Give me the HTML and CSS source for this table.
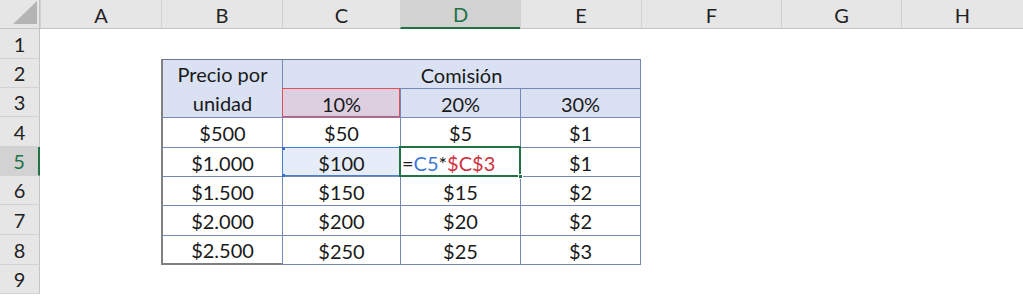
FILE: index.html
```html
<!DOCTYPE html>
<html lang="es">
<head>
  <meta charset="UTF-8" />
  <meta name="viewport" content="width=device-width, initial-scale=1.0"/>
  <title>Comisiones</title>
  <link rel="stylesheet" href="styles.css">
</head>
<body>
  <div class="sheet">
    <!-- column headers -->
    <div class="corner">
      <svg width="24" height="23" viewBox="0 0 24 23"><polygon points="24,0 24,23 0,23" fill="#b4b4b4"/></svg>
    </div>
    <div class="col-head">A</div>
    <div class="col-head">B</div>
    <div class="col-head">C</div>
    <div class="col-head active">D</div>
    <div class="col-head">E</div>
    <div class="col-head">F</div>
    <div class="col-head">G</div>
    <div class="col-head">H</div>

    <!-- row 1 -->
    <div class="row-head">1</div>
    <div></div><div></div><div></div><div></div><div></div><div></div><div></div><div></div>

    <!-- row 2 -->
    <div class="row-head">2</div>
    <div></div>
    <div class="cell head key top merged-v">Precio por<br>unidad</div>
    <div class="cell head top last-col merged-h">Comisión</div>
    <div></div><div></div><div></div>

    <!-- row 3 -->
    <div class="row-head">3</div>
    <div></div>
    <div class="cell head ref-red">10%</div>
    <div class="cell head">20%</div>
    <div class="cell head last-col">30%</div>
    <div></div><div></div><div></div>

    <!-- row 4 -->
    <div class="row-head">4</div>
    <div></div>
    <div class="cell key">$500</div>
    <div class="cell">$50</div>
    <div class="cell">$5</div>
    <div class="cell last-col">$1</div>
    <div></div><div></div><div></div>

    <!-- row 5 -->
    <div class="row-head active">5</div>
    <div></div>
    <div class="cell key">$1.000</div>
    <div class="cell ref-blue">$100</div>
    <div class="cell editing">=<span class="f-blue">C5</span>*<span class="f-red">$C$3</span></div>
    <div class="cell last-col">$1</div>
    <div></div><div></div><div></div>

    <!-- row 6 -->
    <div class="row-head">6</div>
    <div></div>
    <div class="cell key">$1.500</div>
    <div class="cell">$150</div>
    <div class="cell">$15</div>
    <div class="cell last-col">$2</div>
    <div></div><div></div><div></div>

    <!-- row 7 -->
    <div class="row-head">7</div>
    <div></div>
    <div class="cell key">$2.000</div>
    <div class="cell">$200</div>
    <div class="cell">$20</div>
    <div class="cell last-col">$2</div>
    <div></div><div></div><div></div>

    <!-- row 8 -->
    <div class="row-head">8</div>
    <div></div>
    <div class="cell key last-row">$2.500</div>
    <div class="cell last-row">$250</div>
    <div class="cell last-row">$25</div>
    <div class="cell last-row last-col">$3</div>
    <div></div><div></div><div></div>

    <!-- row 9 -->
    <div class="row-head">9</div>
    <div></div><div></div><div></div><div></div><div></div><div></div><div></div><div></div>
  </div>
</body>
</html>
```

FILE: styles.css
```css
body {
  margin: 0;
  background: #fff;
  font-family: 'Lato', 'Liberation Sans', sans-serif;
  font-size: 20px;
  color: #1a1a1a;
  overflow: hidden;
}

.sheet {
  display: grid;
  grid-template-columns: 40px 121px 121px 118px 120px 121px 140px 120px 122px;
  grid-template-rows: 29px 30px 29px 29px 30px 29px 29px 30px 30px 29px;
  width: 1023px;
}

.sheet > div {
  box-sizing: border-box;
}

/* headers */
.corner {
  background: #e6e6e6;
  border-right: 1px solid #c4c4c4;
  border-bottom: 1px solid #c4c4c4;
  display: flex;
  align-items: flex-end;
  justify-content: flex-end;
  padding: 0 2px 4px 0;
}

.corner svg {
  display: block;
}

.col-head {
  background: #e6e6e6;
  border-left: 1px solid #d2d2d2;
  border-bottom: 1px solid #c4c4c4;
  display: flex;
  align-items: center;
  justify-content: center;
  padding-top: 1px;
  color: #222;
}

.col-head.active {
  background: #d2d2d2;
  color: #217346;
  border-bottom: 2px solid #217346;
}

.row-head {
  background: #e6e6e6;
  border-right: 1px solid #c4c4c4;
  border-bottom: 1px solid #d2d2d2;
  display: flex;
  align-items: center;
  justify-content: center;
  color: #222;
}

.row-head.active {
  background: #d2d2d2;
  color: #217346;
  border-right: 2px solid #217346;
}

/* data table */
.cell {
  border-left: 1px solid #7588b8;
  border-top: 1px solid #7588b8;
  display: flex;
  align-items: center;
  justify-content: center;
  padding-top: 1px;
  position: relative;
}

.cell.head {
  background: #d9e1f2;
}

.cell.top {
  border-top-color: #6e7890;
}

.cell.key {
  border-left: 2px solid #808080;
}

.cell.last-col {
  border-right: 1px solid #7588b8;
}

.cell.last-row {
  border-bottom: 1px solid #7588b8;
}

.cell.key.last-row {
  border-bottom: 2px solid #808080;
}

.merged-v {
  grid-row: span 2;
  text-align: center;
  line-height: 29px;
}

.merged-h {
  grid-column: span 3;
}

/* formula references */
.ref-red {
  background: #ddcfdf !important;
  outline: 1px solid #e0505a;
  outline-offset: -1px;
  z-index: 1;
}

.ref-blue {
  background: #e6edf8;
  outline: 1px solid #4a7fd6;
  outline-offset: -1px;
  z-index: 1;
}

.ref-blue::before,
.ref-blue::after {
  content: "";
  position: absolute;
  width: 3px;
  height: 3px;
  background: #3b6fc8;
  left: -1px;
}

.ref-blue::before { top: -1px; }
.ref-blue::after { bottom: -1px; }

.editing {
  justify-content: flex-start;
  padding-left: 1px;
  outline: 2px solid #217346;
  outline-offset: -1px;
  z-index: 2;
}

.editing::after {
  content: "";
  position: absolute;
  right: -3px;
  bottom: -3px;
  width: 5px;
  height: 5px;
  background: #217346;
  border: 1px solid #fff;
  box-sizing: border-box;
}

.f-blue {
  color: #3b78d8;
}

.f-red {
  color: #d0323e;
}
```
